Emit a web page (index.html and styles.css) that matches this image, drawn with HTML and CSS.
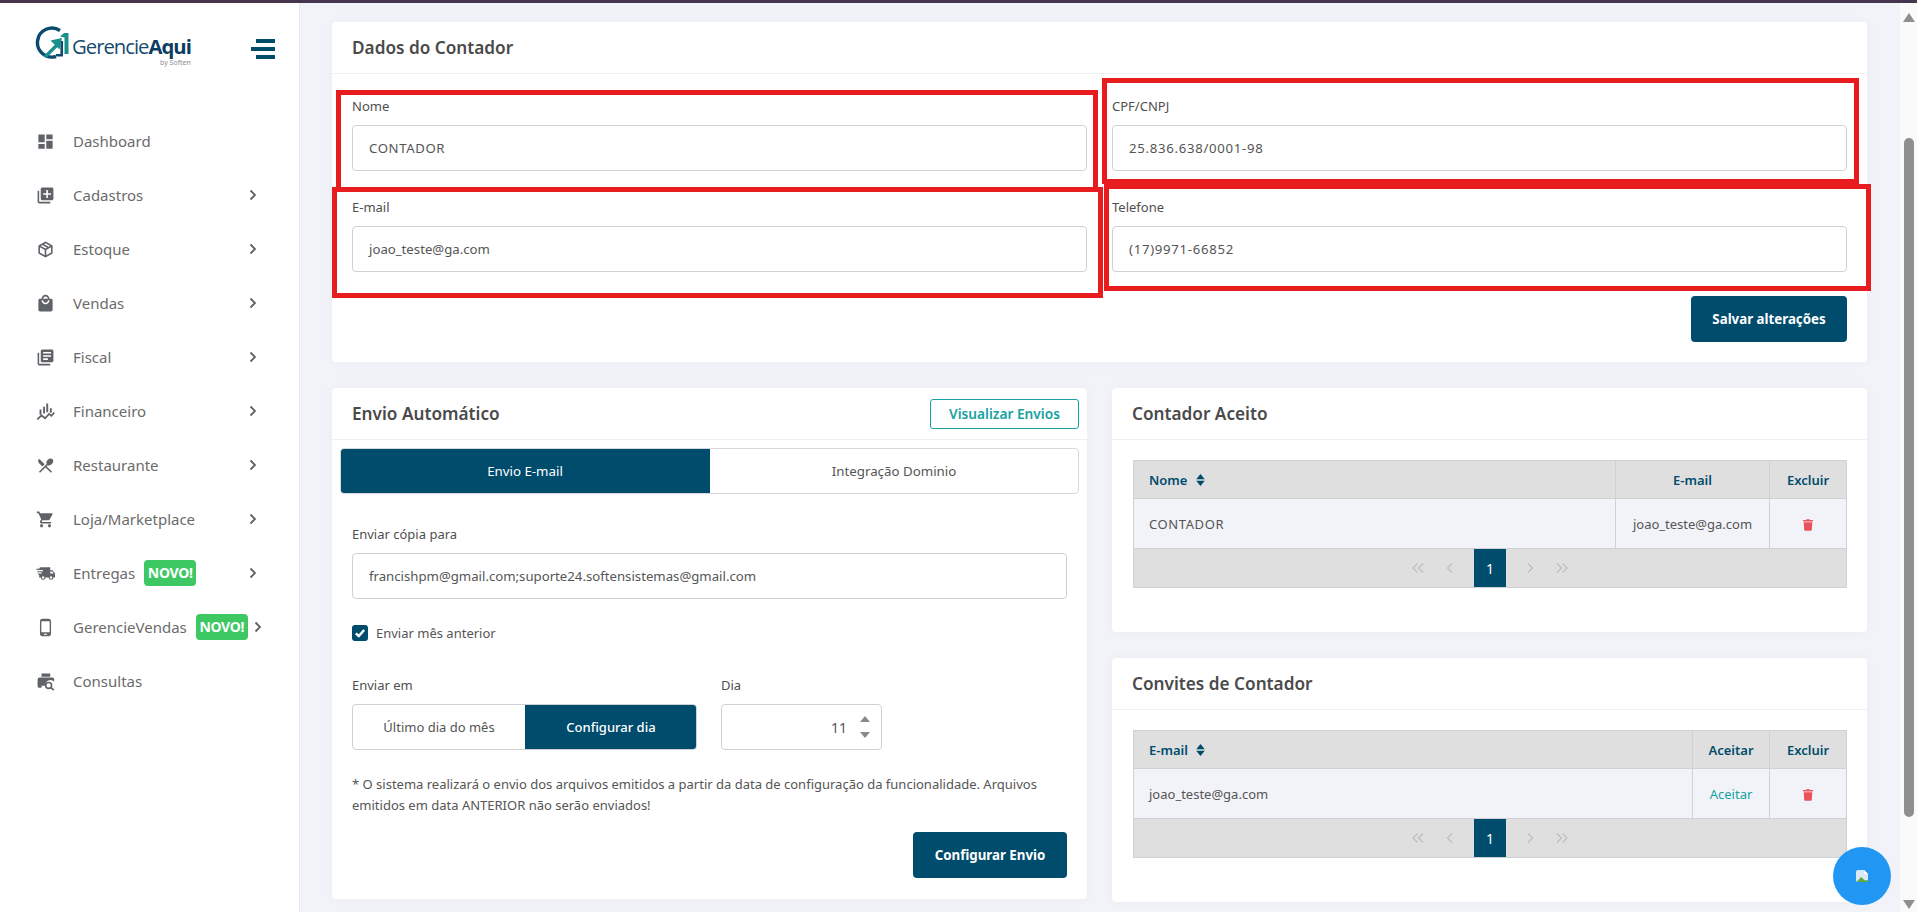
FILE: index.html
```html
<!DOCTYPE html>
<html lang="pt-BR">
<head>
<meta charset="utf-8">
<title>GerencieAqui - Contador</title>
<link rel="stylesheet" href="styles.css">
</head>
<body>
<div class="topbar"></div>
<div class="app">
  <aside class="sidebar">
    <div class="brand">
      <div class="logo">
        <svg class="logo-mark" viewBox="0 0 35 35" width="35" height="35">
          <path d="M25 4.500A14.500 14.500 0 1 0 21 30.500" fill="none" stroke="#0d4a70" stroke-width="3.400"/>
          <path d="M21 29.200H26.700V15" fill="none" stroke="#0d4a70" stroke-width="2.600"/>
          <path d="M10 31 L22 19" fill="none" stroke="#1a8f8c" stroke-width="3.400"/>
          <path d="M15.500 14.500 L27 12 L24.500 23.500Z" fill="#1a8f8c"/>
          <path d="M25 10.500 L29 7 H33.500 V28 H29.500 V11.500Z" fill="#1a8f8c"/>
        </svg>
        <div class="logo-text">
          <div class="logo-name">Gerencie<b>Aqui</b></div>
          <div class="logo-by">by Soften</div>
        </div>
      </div>
      <div class="burger"><span></span><span class="long"></span><span></span></div>
    </div>
    <nav class="menu">
      <div class="item"><svg class="ico" viewBox="0 0 24 24"><path d="M3 13h8V3H3v10zm0 8h8v-6H3v6zm10 0h8V11h-8v10zm0-18v6h8V3h-8z"/></svg><span>Dashboard</span></div>
      <div class="item"><svg class="ico" viewBox="0 0 24 24"><path d="M4 6H2v14c0 1.100.9 2 2 2h14v-2H4V6zm16-4H8c-1.100 0-2 .9-2 2v12c0 1.100.9 2 2 2h12c1.100 0 2-.9 2-2V4c0-1.100-.9-2-2-2zm-1 9h-4v4h-2v-4H9V9h4V5h2v4h4v2z"/></svg><span>Cadastros</span><svg class="chev" viewBox="0 0 8 12"><path d="M1.500 1.500 6 6l-4.500 4.500"/></svg></div>
      <div class="item"><svg class="ico" viewBox="0 0 24 24"><path d="M21 16.500c0 .38-.21.71-.53.88l-7.900 4.440c-.16.12-.36.18-.57.18s-.41-.06-.57-.18l-7.900-4.440A.991.991 0 0 1 3 16.500v-9c0-.38.21-.71.53-.88l7.900-4.440c.16-.12.36-.18.57-.18s.41.06.57.18l7.900 4.440c.32.17.53.5.53.88v9M12 4.150 10.110 5.220 16 8.610l1.960-1.110L12 4.150M6.040 7.500 12 10.850l1.960-1.100-5.880-3.400L6.040 7.500M5 15.910l6 3.380v-6.710L5 9.210v6.700m14 0v-6.700l-6 3.370v6.710l6-3.380Z"/></svg><span>Estoque</span><svg class="chev" viewBox="0 0 8 12"><path d="M1.500 1.500 6 6l-4.500 4.500"/></svg></div>
      <div class="item"><svg class="ico" viewBox="0 0 24 24"><path d="M19 6h-2c0-2.760-2.240-5-5-5S7 3.240 7 6H5c-1.100 0-1.990.9-1.990 2L3 20c0 1.100.9 2 2 2h14c1.100 0 2-.9 2-2V8c0-1.100-.9-2-2-2zm-7-3c1.660 0 3 1.340 3 3H9c0-1.660 1.340-3 3-3zm0 10c-2.760 0-5-2.240-5-5h2c0 1.660 1.340 3 3 3s3-1.340 3-3h2c0 2.760-2.240 5-5 5z"/></svg><span>Vendas</span><svg class="chev" viewBox="0 0 8 12"><path d="M1.500 1.500 6 6l-4.500 4.500"/></svg></div>
      <div class="item"><svg class="ico" viewBox="0 0 24 24"><path d="M4 6H2v14c0 1.100.9 2 2 2h14v-2H4V6zm16-4H8c-1.100 0-2 .9-2 2v12c0 1.100.9 2 2 2h12c1.100 0 2-.9 2-2V4c0-1.100-.9-2-2-2zm-1 9H9V9h10v2zm-4 4H9v-2h6v2zm4-8H9V5h10v2z"/></svg><span>Fiscal</span><svg class="chev" viewBox="0 0 8 12"><path d="M1.500 1.500 6 6l-4.500 4.500"/></svg></div>
      <div class="item"><svg class="ico" viewBox="0 0 24 24"><path d="M4.500 9.500h2.400v6.500H4.500zM9 6h2.400v8.500H9zM13 2h2.400v11H13zM17.500 8h2.400v5.500h-2.400z"/><path d="M1.500 22 7 17l4.500 3.500 5-5.500 3 2.500 3.500-4" fill="none" stroke="#5f6368" stroke-width="2.200"/></svg><span>Financeiro</span><svg class="chev" viewBox="0 0 8 12"><path d="M1.500 1.500 6 6l-4.500 4.500"/></svg></div>
      <div class="item"><svg class="ico" viewBox="0 0 24 24"><path d="M8.100 13.340l2.830-2.830L3.910 3.500c-1.560 1.560-1.560 4.090 0 5.660l4.190 4.180zm6.780-1.810c1.530.71 3.680.21 5.270-1.380 1.910-1.910 2.280-4.650.81-6.120-1.460-1.460-4.200-1.100-6.120.81-1.590 1.590-2.090 3.740-1.380 5.270L3.700 19.870l1.410 1.410L12 14.410l6.880 6.880 1.410-1.410L13.410 13l1.470-1.470z"/></svg><span>Restaurante</span><svg class="chev" viewBox="0 0 8 12"><path d="M1.500 1.500 6 6l-4.500 4.500"/></svg></div>
      <div class="item"><svg class="ico" viewBox="0 0 24 24"><path d="M7 18c-1.100 0-1.990.9-1.990 2S5.900 22 7 22s2-.9 2-2-.9-2-2-2zM1 2v2h2l3.600 7.590-1.350 2.450c-.16.28-.25.61-.25.96 0 1.100.9 2 2 2h12v-2H7.420c-.14 0-.25-.11-.25-.25l.03-.12.9-1.630h7.450c.75 0 1.410-.41 1.750-1.030l3.580-6.490c.08-.14.12-.31.12-.48 0-.55-.45-1-1-1H5.210l-.94-2H1zm16 16c-1.100 0-1.990.9-1.990 2s.89 2 1.990 2 2-.9 2-2-.9-2-2-2z"/></svg><span>Loja/Marketplace</span><svg class="chev" viewBox="0 0 8 12"><path d="M1.500 1.500 6 6l-4.500 4.500"/></svg></div>
      <div class="item"><svg class="ico" viewBox="0 0 24 24"><path d="M3 13.500 2.250 12H7.500L6.900 10.500H2L1.250 9H9.050L8.450 7.500H1.110L.25 6H4A2 2 0 0 1 6 4H18V8H21L24 12V17H22A3 3 0 0 1 19 20 3 3 0 0 1 16 17H12A3 3 0 0 1 9 20 3 3 0 0 1 6 17H4V13.500H3M19 18.500A1.500 1.500 0 0 0 20.500 17 1.500 1.500 0 0 0 19 15.500 1.500 1.500 0 0 0 17.500 17 1.500 1.500 0 0 0 19 18.500M20.500 9.500H18V12H22.460L20.500 9.500M9 18.500A1.500 1.500 0 0 0 10.500 17 1.500 1.500 0 0 0 9 15.500 1.500 1.500 0 0 0 7.500 17 1.500 1.500 0 0 0 9 18.500Z"/></svg><span>Entregas</span><em class="badge">NOVO!</em><svg class="chev" viewBox="0 0 8 12"><path d="M1.500 1.500 6 6l-4.500 4.500"/></svg></div>
      <div class="item"><svg class="ico" viewBox="0 0 24 24"><path d="M16 1H8C6.340 1 5 2.340 5 4v16c0 1.660 1.340 3 3 3h8c1.660 0 3-1.340 3-3V4c0-1.660-1.340-3-3-3zm-2 20h-4v-1h4v1zm3.250-3H6.750V4h10.500v14z"/></svg><span>GerencieVendas</span><em class="badge">NOVO!</em><svg class="chev tight" viewBox="0 0 8 12"><path d="M1.500 1.500 6 6l-4.500 4.500"/></svg></div>
      <div class="item"><svg class="ico" viewBox="0 0 24 24"><path d="M7 2h11v4H7zM4.500 7h16A2.500 2.500 0 0 1 23 9.500V12a6.500 6.500 0 0 0-11 5.500H7V20H4a2 2 0 0 1-2-2V9.500A2.500 2.500 0 0 1 4.500 7z"/><circle cx="16" cy="17" r="3.700" fill="none" stroke="#5f6368" stroke-width="2"/><path d="M18.500 19.500 22.500 23" stroke="#5f6368" stroke-width="2.200" fill="none"/></svg><span>Consultas</span></div>
    </nav>
  </aside>

  <main class="content">
    <section class="card">
      <header class="card-head"><h2>Dados do Contador</h2></header>
      <div class="form-body">
        <div class="form-grid">
          <div class="field"><label>Nome</label><div class="control caps">CONTADOR</div></div>
          <div class="field"><label>CPF/CNPJ</label><div class="control digits">25.836.638/0001-98</div></div>
          <div class="field"><label>E-mail</label><div class="control">joao_teste@ga.com</div></div>
          <div class="field"><label>Telefone</label><div class="control digits">(17)9971-66852</div></div>
        </div>
        <div class="actions"><button class="btn save">Salvar alterações</button></div>
      </div>
    </section>

    <div class="columns">
      <section class="card envio">
        <header class="card-head"><h2>Envio Automático</h2><button class="btn-outline">Visualizar Envios</button></header>
        <div class="tabs"><div class="tab active">Envio E-mail</div><div class="tab">Integração Dominio</div></div>
        <div class="envio-body">
          <div class="field"><label>Enviar cópia para</label><div class="control">francishpm@gmail.com;suporte24.softensistemas@gmail.com</div></div>
          <div class="check"><span class="box"><svg viewBox="0 0 16 16" width="16" height="16"><path d="M3.800 8.300 6.800 11l5.400-6" fill="none" stroke="#fff" stroke-width="2.400"/></svg></span>Enviar mês anterior</div>
          <div class="send-row">
            <div class="send-col"><label>Enviar em</label>
              <div class="segment"><div class="seg">Último dia do mês</div><div class="seg active">Configurar dia</div></div>
            </div>
            <div class="day-col"><label>Dia</label>
              <div class="control number"><span>11</span><span class="spin"><i class="up"></i><i class="down"></i></span></div>
            </div>
          </div>
          <p class="note">* O sistema realizará o envio dos arquivos emitidos a partir da data de configuração da funcionalidade. Arquivos emitidos em data ANTERIOR não serão enviados!</p>
          <div class="actions"><button class="btn config">Configurar Envio</button></div>
        </div>
      </section>

      <div class="stack">
        <section class="card table-card">
          <header class="card-head"><h2>Contador Aceito</h2></header>
          <div class="table-wrap">
            <table class="grid accepted">
              <thead><tr><th class="left">Nome <svg class="sort" viewBox="0 0 10 14"><path d="M5 0 10 6H0zM5 14 0 8h10z"/></svg></th><th class="c-mail">E-mail</th><th class="c-del">Excluir</th></tr></thead>
              <tbody><tr><td class="caps">CONTADOR</td><td class="center">joao_teste@ga.com</td><td class="center"><svg class="trash" viewBox="0 0 448 512"><path d="M432 32H312l-9.400-18.700A24 24 0 0 0 281.100 0H166.800a23.720 23.720 0 0 0-21.400 13.300L136 32H16A16 16 0 0 0 0 48v32a16 16 0 0 0 16 16h416a16 16 0 0 0 16-16V48a16 16 0 0 0-16-16zM53.200 467a48 48 0 0 0 47.900 45h245.800a48 48 0 0 0 47.900-45L416 128H32z"/></svg></td></tr></tbody>
            </table>
            <div class="pager">
              <span class="pg"><svg viewBox="0 0 12 10"><path d="M5.500.5 1 5l4.500 4.500M11 .5 6.500 5l4.500 4.500"/></svg></span>
              <span class="pg"><svg viewBox="0 0 12 10"><path d="M8 .5 3.500 5 8 9.500"/></svg></span>
              <span class="pg current">1</span>
              <span class="pg"><svg viewBox="0 0 12 10"><path d="M4 .5 8.500 5 4 9.500"/></svg></span>
              <span class="pg"><svg viewBox="0 0 12 10"><path d="M1 .5 5.500 5 1 9.500M6.500.5 11 5l-4.500 4.500"/></svg></span>
            </div>
          </div>
        </section>
        <section class="card table-card">
          <header class="card-head"><h2>Convites de Contador</h2></header>
          <div class="table-wrap">
            <table class="grid invites">
              <thead><tr><th class="left">E-mail <svg class="sort" viewBox="0 0 10 14"><path d="M5 0 10 6H0zM5 14 0 8h10z"/></svg></th><th class="c-ok">Aceitar</th><th class="c-del">Excluir</th></tr></thead>
              <tbody><tr><td>joao_teste@ga.com</td><td class="center accept">Aceitar</td><td class="center"><svg class="trash" viewBox="0 0 448 512"><path d="M432 32H312l-9.400-18.700A24 24 0 0 0 281.100 0H166.800a23.720 23.720 0 0 0-21.400 13.300L136 32H16A16 16 0 0 0 0 48v32a16 16 0 0 0 16 16h416a16 16 0 0 0 16-16V48a16 16 0 0 0-16-16zM53.200 467a48 48 0 0 0 47.900 45h245.800a48 48 0 0 0 47.900-45L416 128H32z"/></svg></td></tr></tbody>
            </table>
            <div class="pager">
              <span class="pg"><svg viewBox="0 0 12 10"><path d="M5.500.5 1 5l4.500 4.500M11 .5 6.500 5l4.500 4.500"/></svg></span>
              <span class="pg"><svg viewBox="0 0 12 10"><path d="M8 .5 3.500 5 8 9.500"/></svg></span>
              <span class="pg current">1</span>
              <span class="pg"><svg viewBox="0 0 12 10"><path d="M4 .5 8.500 5 4 9.500"/></svg></span>
              <span class="pg"><svg viewBox="0 0 12 10"><path d="M1 .5 5.500 5 1 9.500M6.500.5 11 5l-4.500 4.500"/></svg></span>
            </div>
          </div>
        </section>
      </div>
    </div>
  </main>

  <div class="scrollbar">
    <span class="arrow up"></span>
    <span class="thumb"></span>
    <span class="arrow down"></span>
  </div>
</div>

<div class="mark m1"></div>
<div class="mark m2"></div>
<div class="mark m3"></div>
<div class="mark m4"></div>

<div class="chat">
  <svg viewBox="0 0 14 14" width="14" height="14">
    <path d="M1 3a2 2 0 0 1 2-2h6l4 4v6a2 2 0 0 1-2 2H3a2 2 0 0 1-2-2z" fill="#dbe9f7"/>
    <path d="M9 1v4h4z" fill="#ffffff"/>
    <path d="M2 12.500 6 8l4 3.500 3-.5v2H3z" fill="#5cab3c"/>
  </svg>
</div>
</body>
</html>
```
FILE: styles.css
```css
* { box-sizing: border-box; }
html, body { margin: 0; height: 912px; overflow: hidden; }
body {
  font-family: "Noto Sans", "Open Sans", sans-serif;
  color: #495057;
  background: #f1f3f8;
  font-size: 13px;
}
.topbar { height: 3px; background: #46364d; }
.app { display: flex; height: 909px; }

/* sidebar */
.sidebar { width: 300px; flex: none; background: #fff; border-right: 1px solid #e6e8ee; }
.brand { height: 111px; display: flex; align-items: flex-start; justify-content: space-between; padding: 23px 24px 0 35px; }
.logo { display: flex; align-items: flex-start; }
.logo-mark { flex: none; }
.logo-text { margin: 8px 0 0 2px; color: #174a70; }
.logo-name { font-family: "Open Sans", sans-serif; font-size: 20.3px; letter-spacing: -1px; line-height: 24px; }
.logo-name b { color: #0c3c63; font-weight: 700; }
.logo-by { font-size: 7px; color: #8b8f94; text-align: right; line-height: 7px; margin-top: 1px; }
.burger { display: flex; flex-direction: column; align-items: flex-end; gap: 4px; margin-top: 13px; }
.burger span { width: 19px; height: 4px; background: #004c6d; }
.burger .long { width: 24px; }
.menu { display: flex; flex-direction: column; }
.item { height: 54px; display: flex; align-items: center; padding-left: 36px; font-size: 15px; color: #6b6b6b; position: relative; }
.ico { width: 19px; height: 19px; fill: #5f6368; margin-right: 18px; flex: none; }
.chev { width: 8px; height: 12px; fill: none; stroke: #5f6368; stroke-width: 1.8; position: absolute; left: 249px; }
.chev.tight { left: 254px; }
.badge { font-style: normal; font-weight: 700; font-size: 14px; letter-spacing: -.3px; color: #fff; background: #3dc864; border-radius: 4px; width: 52px; height: 26px; line-height: 25px; text-align: center; margin-left: 9px; }

/* main */
.content { flex: 1; min-width: 0; padding: 19px 33px 0 32px; overflow: hidden; }
.card { background: #fff; border-radius: 4px; box-shadow: 0 0 13px rgba(20, 30, 60, .03); }
.card-head { height: 52px; display: flex; align-items: center; justify-content: space-between; padding: 0 20px; border-bottom: 1px solid #eff0f3; }
.card-head h2 { margin: -1px 0 0; font-size: 17.2px; font-weight: 600; color: #4a4a4a; }
.form-body { padding: 0 20px 20px; }
.form-grid { display: grid; grid-template-columns: 735px 735px; column-gap: 25px; padding-top: 23px; margin-bottom: -3px; }
.field { height: 101px; }
label { display: block; font-size: 13px; line-height: 18px; color: #4f4f4f; margin-bottom: 10px; }
.control { height: 46px; border: 1px solid #cfd1d4; border-radius: 4px; padding: 0 16px; display: flex; align-items: center; font-size: 13.2px; color: #555; background: #fff; }
.caps { letter-spacing: .6px; }
.digits { letter-spacing: .7px; }
.actions { display: flex; justify-content: flex-end; }
.btn { background: #004c6d; border: 0; border-radius: 4px; color: #fff; font: 700 13.3px "Noto Sans", sans-serif; height: 46px; }
.btn.save { width: 156px; }
.btn.config { width: 154px; }
.columns { display: flex; gap: 25px; margin-top: 26px; align-items: flex-start; }
.envio { width: 755px; height: 511px; }
.btn-outline { width: 149px; height: 30px; margin-right: -12px; background: #fff; border: 1px solid #16a2a2; border-radius: 3px; color: #16a2a2; font: 600 13.7px "Noto Sans", sans-serif; }
.tabs { display: flex; margin: 8px 8px 0; height: 46px; border: 1px solid #d6d7da; border-radius: 4px; overflow: hidden; }
.tab { flex: 1; display: flex; align-items: center; justify-content: center; font-size: 13.3px; color: #555; }
.tab.active { flex: none; width: 370px; background: #004c6d; color: #fff; margin: -1px 0 -1px -1px; }
.envio-body { padding: 31px 20px 0; }
.envio-body .field { height: auto; }
.check { display: flex; align-items: center; font-size: 13px; color: #555; margin-top: 26px; height: 16px; }
.box { width: 16px; height: 16px; background: #004c6d; border-radius: 3px; margin-right: 8px; display: block; }
.box svg { display: block; }
.send-row { display: flex; margin-top: 35px; gap: 24px; }
.segment { display: flex; width: 345px; height: 46px; border: 1px solid #cfd1d4; border-radius: 4px; overflow: hidden; }
.seg { flex: 1; display: flex; align-items: center; justify-content: center; font-size: 13px; color: #555; }
.seg.active { background: #004c6d; color: #fff; font-weight: 500; margin: -1px -1px -1px 0; }
.number { width: 161px; justify-content: flex-end; padding: 0 11px 0 0; font-size: 14px; gap: 13px; }
.spin { display: flex; flex-direction: column; gap: 10px; }
.spin i { display: block; width: 0; height: 0; border-left: 5px solid transparent; border-right: 5px solid transparent; }
.spin .up { border-bottom: 6px solid #8a8a8a; }
.spin .down { border-top: 6px solid #8a8a8a; }
.note { margin: 24px 0 0; font-size: 13px; line-height: 21px; color: #555; width: 715px; }
.envio .actions { margin-top: 16px; }
.stack { width: 755px; display: flex; flex-direction: column; gap: 26px; }
.table-card { height: 244px; }
.table-wrap { padding: 20px 20px 0 21px; }
.grid { width: 714px; border-collapse: collapse; table-layout: fixed; font-size: 13px; color: #555; }
.grid th, .grid td { border: 1px solid #cfd1d4; padding: 0 15px; }
.grid th { height: 38px; background: #dfdfdf; color: #004c6d; font-weight: 600; }
.grid td { height: 50px; background: #f2f3f8; }
.grid .left { text-align: left; }
.center { text-align: center; }
.grid .c-mail { width: 154px; }
.grid .c-del { width: 77px; }
.grid .c-ok { width: 77px; }
.grid td.center { padding: 0; }
.accept { color: #16a2a2 !important; }
.sort { width: 9px; height: 12px; fill: #004c6d; margin-left: 5px; vertical-align: -1px; }
.trash { width: 10px; height: 12px; fill: #e9525a; display: inline-block; vertical-align: middle; }
.pager { width: 714px; height: 39px; background: #dfdfdf; border: 1px solid #cfd1d4; border-top: 0; display: flex; justify-content: center; }
.pg { width: 32px; display: flex; align-items: center; justify-content: center; }
.pg svg { width: 12px; height: 10px; fill: none; stroke: #bdbdbd; stroke-width: 1.2; }
.pg.current { background: #004c6d; color: #fff; font-size: 14px; margin: 0 8px; }

/* browser scrollbar */
.scrollbar { width: 17px; flex: none; background: #fafafa; display: flex; flex-direction: column; align-items: center; }
.thumb { width: 10px; height: 679px; background: #8f8f8f; border-radius: 5px; margin-top: 116px; margin-left: 1px; }
.arrow { width: 0; height: 0; border-left: 6px solid transparent; border-right: 6px solid transparent; margin-left: 1px; }
.arrow.up { border-bottom: 9px solid #8f8f8f; margin-top: 10px; }
.arrow.down { border-top: 9px solid #8f8f8f; margin-top: 83px; }

/* red annotation rectangles over the form */
.mark { position: absolute; border: 5px solid #e81c1f; }
.m1 { left: 336px; top: 90px; width: 762px; height: 102px; }
.m2 { left: 332px; top: 187px; width: 771px; height: 111px; }
.m3 { left: 1102px; top: 78px; width: 757px; height: 106px; }
.m4 { left: 1104px; top: 184px; width: 767px; height: 107px; }

/* chat bubble */
.chat { position: absolute; left: 1833px; top: 847px; width: 58px; height: 58px; border-radius: 50%; background: #2196f3; display: flex; align-items: center; justify-content: center; }
```
